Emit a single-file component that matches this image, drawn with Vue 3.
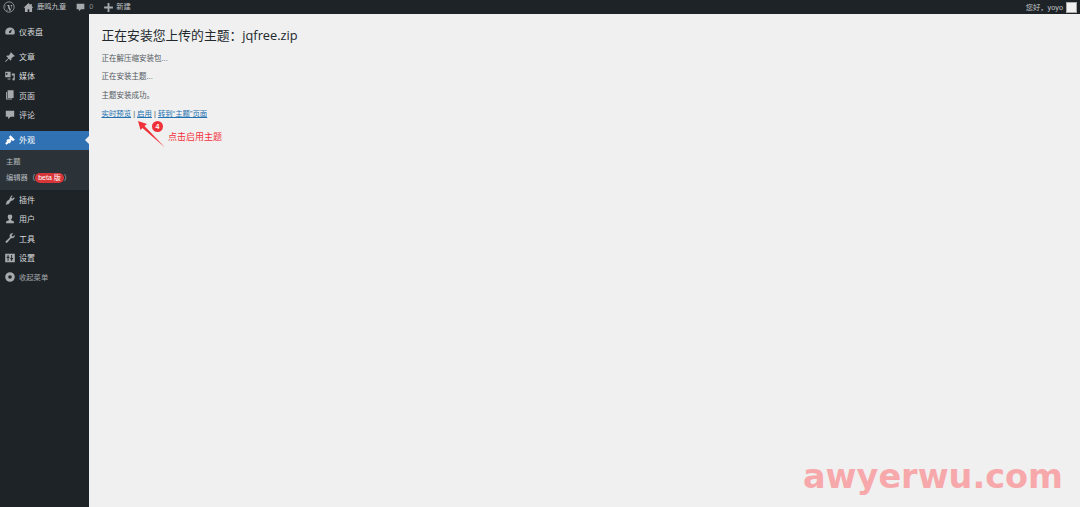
<template>
  <div class="page">
    <header class="adminbar">
      <svg class="wp" viewBox="0 0 20 20"><circle cx="10" cy="10" r="8.6" fill="none" stroke="#a7aaad" stroke-width="1.3"/><path d="M3.2 7.4 7 16.8l2-5.6-1.4-3.800-1-.1v-.8h4.600v.8l-1 .1 2.300 6.700 1.300-4.200c.4-1.500-.3-2.400-1-2.500v-.8h3.800l-1.200.6-3.200 9.700-.9.300-2-5.500-2 5.500-.9-.3L4 7.500l-.8-.1z" fill="#a7aaad"/></svg>
      <svg class="bar-icon home" viewBox="0 0 20 20"><path d="M10 2 1 10.500h2.500V18h5v-5h3v5h5v-7.500H19L16 7.700V3.500h-2.500v1.900z" fill="#a7aaad"/></svg>
      <span class="bar-text site">鹿鸣九章</span>
      <svg class="bar-icon comment" viewBox="0 0 20 20"><path d="M3 3h14v10h-6l-4 4v-4H3z" fill="#a7aaad"/></svg>
      <span class="bar-text count">0</span>
      <svg class="bar-icon plus" viewBox="0 0 20 20"><path d="M8.300 2h3.400v6.300H18v3.400h-6.300V18H8.300v-6.300H2V8.300h6.300z" fill="#a7aaad"/></svg>
      <span class="bar-text">新建</span>
      <span class="greeting">您好，yoyo</span>
      <span class="avatar"></span>
    </header>

    <div class="body">
      <aside class="sidebar">
        <ul class="menu first">
          <li class="item"><svg class="icon" viewBox="0 0 20 20"><path d="M10 4a8 8 0 0 0-8 8c0 1.600.5 3 1.200 4h13.600c.7-1 1.200-2.400 1.200-4a8 8 0 0 0-8-8zm0 9.500a1.800 1.800 0 0 1-1.200-3.100L13.500 7l-2 5.500a1.800 1.800 0 0 1-1.500 1z" fill="#a7aaad" fill-rule="evenodd"/></svg>仪表盘</li>
        </ul>
        <ul class="menu second">
          <li class="item"><svg class="icon" viewBox="0 0 20 20"><path d="m11.500 2 6.500 6.500-1.300 1.200-1-.6-3.500 3.500c.4 1.500.2 2.800-.7 3.700L8 12.900 3.200 18l-1.200-.2.200-1.200L7.100 12 3.600 8.500c.9-.9 2.300-1.100 3.700-.7l3.500-3.500-.6-1z" fill="#a7aaad"/></svg>文章</li>
          <li class="item"><svg class="icon" viewBox="0 0 20 20"><path d="M2 3h9v9H2zm2.500 2a1.500 1.500 0 1 0 0 3 1.500 1.500 0 0 0 0-3zM13 6h5v9.500a2 2 0 1 1-2-2V9h-3zM6 14h5v2H6z" fill="#a7aaad" fill-rule="evenodd"/></svg>媒体</li>
          <li class="item"><svg class="icon" viewBox="0 0 20 20"><path d="M6 2h10v13H6zM3.500 5H5v11h8.500v1.500h-10z" fill="#a7aaad"/></svg>页面</li>
          <li class="item"><svg class="icon" viewBox="0 0 20 20"><path d="M3 3h14v10h-6l-4 4v-4H3z" fill="#a7aaad"/></svg>评论</li>
        </ul>
        <ul class="menu">
          <li class="item active"><svg class="icon" viewBox="0 0 20 20"><path d="M11 2l7 7-3 3-2-2-2 2 1 1-3 3-1-1-4 3-2-2 3-4-1-1 3-3 1 1 2-2-2-2z" fill="#fff"/></svg>外观</li>
        </ul>
        <ul class="submenu">
          <li class="sub">主题</li>
          <li class="sub">编辑器（<span class="beta">beta 版</span>）</li>
        </ul>
        <ul class="menu">
          <li class="item"><svg class="icon" viewBox="0 0 20 20"><path d="M13 2l1.500 1.500-2.500 2.500 2 2 2.500-2.500L18 7l-3 3.500c-.8.800-2 1-3 .6L9.500 14c-.3 1.500-2 3-4 3l-2 1-1-1 1.500-2c0-2 1-3.500 2.500-4l3-2.500c-.4-1 0-2 .6-2.700z" fill="#a7aaad"/></svg>插件</li>
          <li class="item"><svg class="icon" viewBox="0 0 20 20"><path d="M10 2.500a3.700 3.700 0 0 1 3.700 4c0 2-1.200 3.600-2.200 4.200v1l5 2.300V17H3.500v-3l5-2.300v-1C7.500 10.100 6.300 8.500 6.300 6.500a3.700 3.700 0 0 1 3.700-4z" fill="#a7aaad"/></svg>用户</li>
          <li class="item"><svg class="icon" viewBox="0 0 20 20"><path d="M14 2a4.500 4.500 0 0 1 1.500.3L12.800 5l.4 2 2 .4 2.700-2.700A4.500 4.500 0 0 1 12 10.200L5.500 17.500a1.600 1.600 0 0 1-2.600-2.200l7-6.600A4.500 4.500 0 0 1 14 2z" fill="#a7aaad"/></svg>工具</li>
          <li class="item"><svg class="icon" viewBox="0 0 20 20"><path d="M2 3h16v14H2zm4 2v3H4.500v2H6v5h1.500v-5H9V8H7.500V5zm6 0v5h-1.500v2H12v3h1.500v-3H15v-2h-1.500V5z" fill="#a7aaad" fill-rule="evenodd"/></svg>设置</li>
          <li class="item collapse"><svg class="icon" viewBox="0 0 20 20"><path d="M10 2a8 8 0 1 1 0 16 8 8 0 0 1 0-16zm0 5a3 3 0 1 0 0 6 3 3 0 0 0 0-6z" fill="#a7aaad" fill-rule="evenodd"/></svg>收起菜单</li>
        </ul>
      </aside>

      <main class="content">
        <h1>正在安装您上传的主题：jqfree.zip</h1>
        <p>正在解压缩安装包...</p>
        <p>正在安装主题...</p>
        <p class="done">主题安装成功。</p>
        <p class="links"><a>实时预览</a> | <a>启用</a> | <a>转到“主题”页面</a></p>

        <svg class="arrow" viewBox="0 0 30 30"><path d="M1 1 L10 4 L7.500 6 L28 27.500 L5.500 8 L3.500 10 Z" fill="#f0313a"/></svg>
        <span class="badge">4</span>
        <span class="note">点击启用主题</span>
      </main>
    </div>
    <span class="watermark">awyerwu.com</span>
  </div>
</template>

<script setup>
</script>

<style>
html, body { margin: 0; background: #f0f0f0; }
</style>

<style scoped>
.page {
  position: relative;
  width: 1080px;
  height: 507px;
  overflow: hidden;
  font-family: "Liberation Sans", "Noto Sans CJK SC", sans-serif;
  background: #f0f0f0;
}
.adminbar {
  display: flex;
  align-items: center;
  height: 14px;
  background: #1d2327;
  color: #c3c4c7;
  font-size: 7.300px;
  padding: 0 3px 0 3px;
}
.wp { width: 12px; height: 12px; margin-right: 8px; }
.bar-icon { width: 11px; height: 11px; flex: none; }
.home { margin-right: 3px; }
.site { margin-right: 9px; }
.comment { margin-right: 3px; }
.count { color: #8c8f94; margin-right: 10px; }
.plus { margin-right: 2px; }
.bar-text { line-height: 14px; }
.greeting { margin-left: auto; margin-right: 3px; }
.avatar {
  width: 9px;
  height: 9px;
  background: #f0f0f0;
  border: 1px solid #aaa;
}
.body { display: flex; height: 493px; }
.sidebar {
  width: 89px;
  flex: none;
  background: #1d2327;
  color: #f0f0f1;
  font-size: 8px;
}
ul { list-style: none; margin: 0; padding: 0; }
.menu.first { padding-top: 8px; }
.menu.second { padding-top: 6px; padding-bottom: 6.500px; }
.item {
  position: relative;
  display: flex;
  align-items: center;
  box-sizing: border-box;
  height: 19.300px;
  padding: 0 0 .500px 3.500px;
  color: #d9dadb;
}
.icon { width: 12px; height: 12px; margin-right: 3.500px; flex: none; }
.active { background: #2f71b2; color: #fff; padding-bottom: 1.500px; }
.active::after {
  content: "";
  position: absolute;
  right: 0;
  top: 5px;
  border: 4.500px solid transparent;
  border-right-color: #f0f0f0;
  border-left: 0;
}
.submenu { background: #2c3338; padding: 4px 0 4px; height: 32px; }
.sub {
  height: 16px;
  line-height: 16px;
  padding-left: 6px;
  color: #b4b9be;
  font-size: 7.300px;
  white-space: nowrap;
}
.beta {
  display: inline-block;
  height: 10px;
  line-height: 10px;
  padding: 0 3px;
  border-radius: 5px;
  background: #d63638;
  color: #fff;
  font-size: 7px;
}
.collapse { color: #a7aaad; font-size: 7.300px; }
.content {
  position: relative;
  flex: 1;
  padding: 11px 0 0 12.500px;
  color: #50575e;
  font-size: 7.500px;
}
h1 {
  margin: 0 0 8.500px;
  font-size: 12.800px;
  line-height: 20px;
  font-weight: 400;
  color: #23282d;
  font-family: "Open Sans", "Noto Sans CJK SC", sans-serif;
}
p { margin: 0 0 8px; line-height: 10.500px; }
.links { font-size: 7.400px; }
a { color: #2271b1; text-decoration: underline; }
.arrow { position: absolute; left: 47.500px; top: 105.500px; width: 30px; height: 30px; }
.badge {
  position: absolute;
  left: 63px;
  top: 106.500px;
  width: 11px;
  height: 11px;
  border-radius: 50%;
  background: #f0313a;
  color: #fff;
  font: 700 7px/11px "Liberation Sans", sans-serif;
  text-align: center;
}
.note {
  position: absolute;
  left: 79px;
  top: 116px;
  color: #f5323b;
  font-size: 9px;
  line-height: 14px;
}
.watermark {
  position: absolute;
  left: 803px;
  top: 455px;
  color: #f7a8ab;
  font: 700 33.500px/44px "DejaVu Sans", sans-serif;
  white-space: nowrap;
}
</style>
